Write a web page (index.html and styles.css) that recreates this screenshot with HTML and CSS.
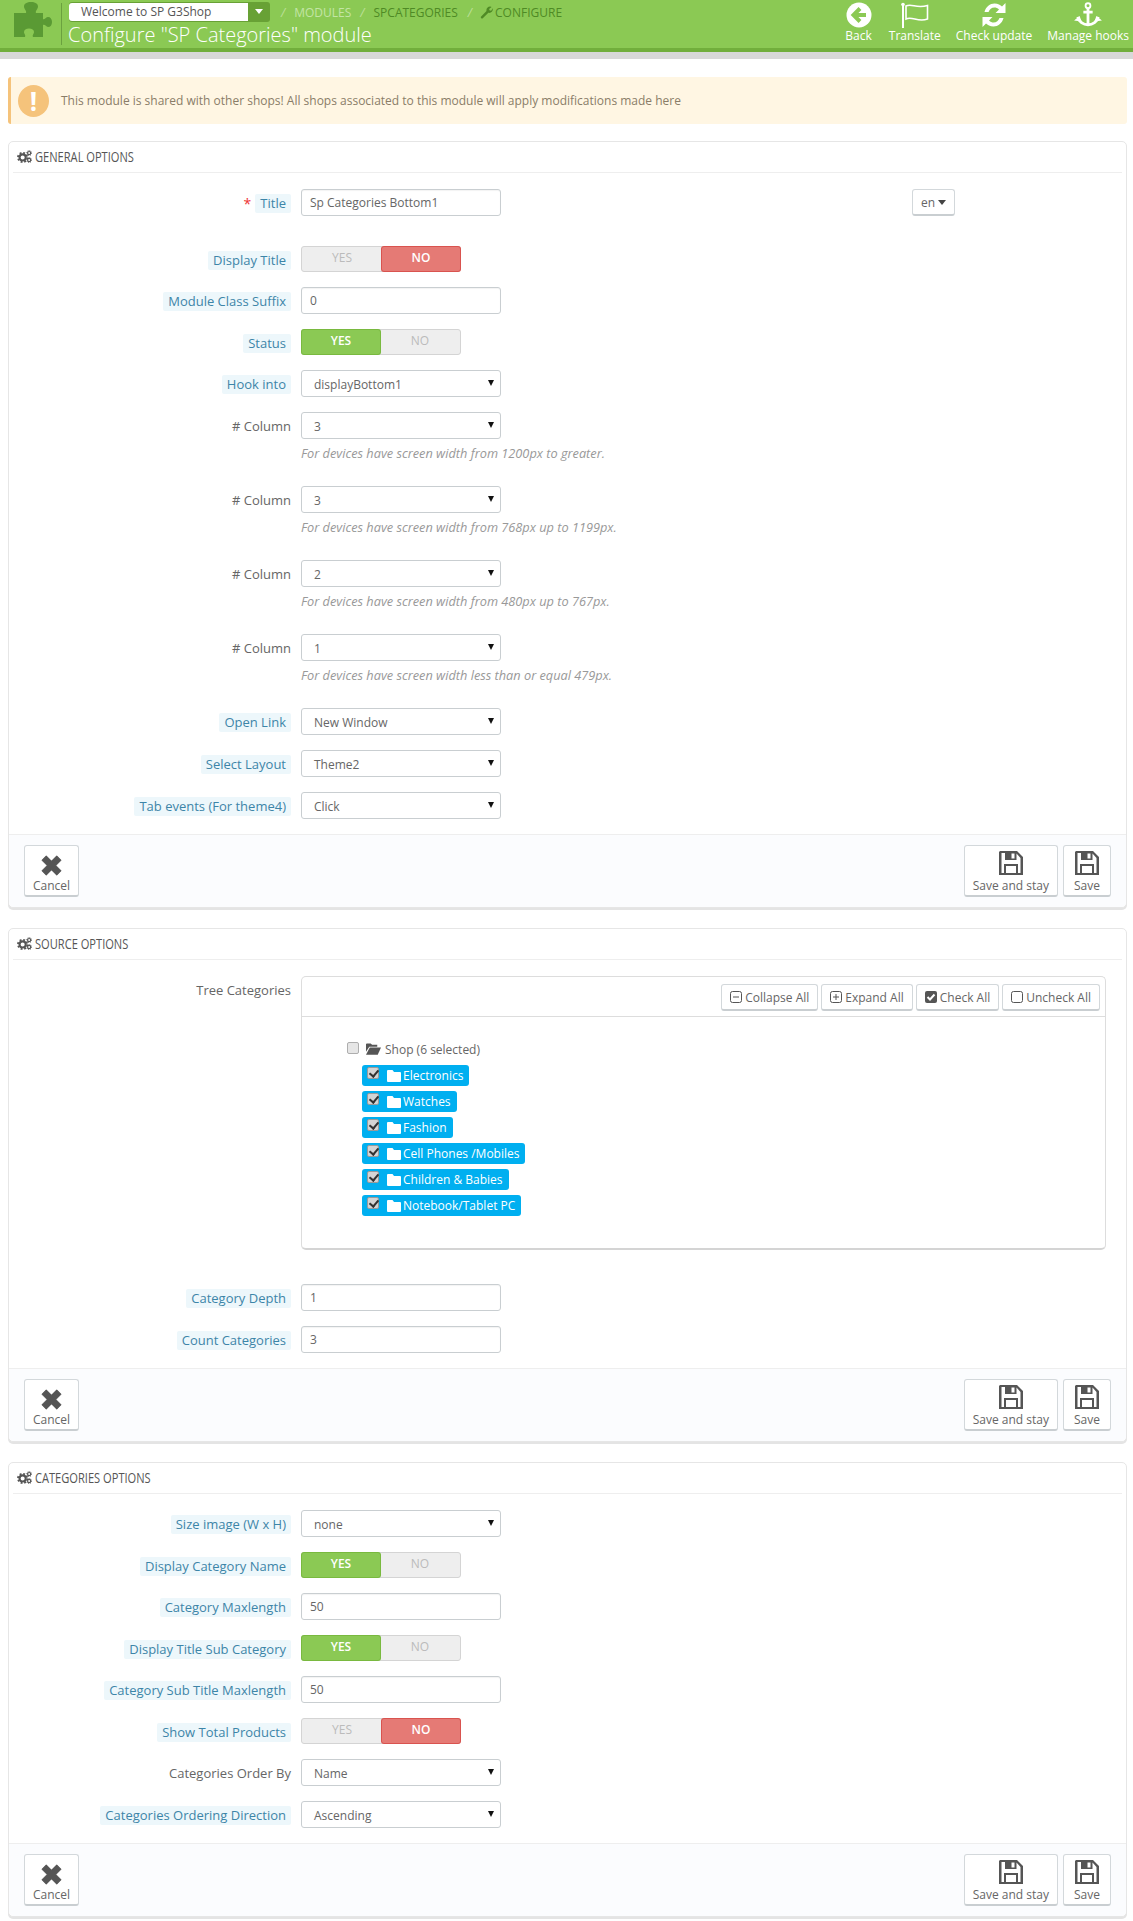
FILE: index.html
```html
<!DOCTYPE html>
<html lang="en">
<head>
<meta charset="utf-8">
<title>Configure "SP Categories" module</title>
<link rel="stylesheet" href="styles.css">
</head>
<body>
<svg class="defs" width="0" height="0" aria-hidden="true">
  <defs>
    <symbol id="cogs" viewBox="0 0 16 14">
      <circle cx="6" cy="8" r="3.3" fill="none" stroke="currentColor" stroke-width="2.2"/>
      <circle cx="6" cy="8" r="5" fill="none" stroke="currentColor" stroke-width="2" stroke-dasharray="2 1.93"/>
      <circle cx="13" cy="3.3" r="1.7" fill="none" stroke="currentColor" stroke-width="1.3"/>
      <circle cx="13" cy="3.3" r="2.7" fill="none" stroke="currentColor" stroke-width="1" stroke-dasharray="1 1.12"/>
      <circle cx="13" cy="10.8" r="1.7" fill="none" stroke="currentColor" stroke-width="1.3"/>
      <circle cx="13" cy="10.8" r="2.7" fill="none" stroke="currentColor" stroke-width="1" stroke-dasharray="1 1.12"/>
    </symbol>
    <symbol id="x" viewBox="0 0 20 20">
      <path d="M5 1 10 6 15 1 19 5 14 10 19 15 15 19 10 14 5 19 1 15 6 10 1 5Z" fill="currentColor" stroke="currentColor" stroke-linejoin="round" stroke-width="1"/>
    </symbol>
    <symbol id="floppy" viewBox="0 0 24 24">
      <path fill-rule="evenodd" fill="currentColor" d="M1 0H18L24 6V24H0V1ZM2.500 2V22H5V13H19V22H21.500V7L17.500 2.500V9H6V2ZM7 22H17V15H7ZM12.500 2.500V7.500H15.500V2.500Z"/>
    </symbol>
    <symbol id="folder" viewBox="0 0 14 12">
      <path fill="currentColor" d="M1 0H5.500L7 2H13A1 1 0 0 1 14 3V11A1 1 0 0 1 13 12H1A1 1 0 0 1 0 11V1A1 1 0 0 1 1 0Z"/>
    </symbol>
    <symbol id="folder-open" viewBox="0 0 16 12">
      <path fill="currentColor" d="M0 1A1 1 0 0 1 1 0H5L6.500 1.500H12V3.500H3.500L0 9Z"/>
      <path fill="currentColor" d="M4 4.500H16L12.500 12H0Z"/>
    </symbol>
  </defs>
</svg>

<header class="topbar">
  <svg class="puzzle" viewBox="0 0 40 36" aria-hidden="true">
    <path fill="currentColor" d="M2 11H14C15 9 12 7 12 4.500 12 1.500 15 0 19 0 23 0 26 1.500 26 4.500 26 7 23 9 24 11H31V17C33 18 34 15 36 15 38.500 15 40 17 40 20 40 23 38.500 25 36 25 34 25 33 22 31 23V35H21C20 33 22 32 22 30 22 28 20 26.500 17 26.500 14 26.500 12 28 12 30 12 32 14 33 13 35H2Z"/>
  </svg>
  <div class="topbar-main">
    <div class="crumbs">
      <div class="shop-select">
        <span class="shop-name">Welcome to SP G3Shop</span>
        <span class="shop-caret"></span>
      </div>
      <span class="crumb-sep">/</span>
      <span class="crumb crumb-light">MODULES</span>
      <span class="crumb-sep">/</span>
      <span class="crumb">SPCATEGORIES</span>
      <span class="crumb-sep">/</span>
      <span class="crumb crumb-icon">
        <svg class="wrench" viewBox="0 0 14 14" aria-hidden="true"><path fill="currentColor" d="M1 11.500 7 5.500C6.500 3 8 .5 11 .5L12.500 1 9.800 3.300 10.400 4.800 12 5 13.800 2.500C14.300 5.500 12 8 9 7.300L3 13.300C2 14 .3 12.500 1 11.500Z"/></svg>
        CONFIGURE
      </span>
    </div>
    <h1 class="page-title">Configure "SP Categories" module</h1>
  </div>
  <nav class="toolbar">
    <a class="tool tool-back">
      <svg viewBox="0 0 26 26" aria-hidden="true"><circle cx="13" cy="13" r="12.500" fill="currentColor"/><path d="M14 6.500 7.500 13 14 19.500M8 13H20" fill="none" stroke="#8bc954" stroke-width="4"/></svg>
      <span>Back</span>
    </a>
    <a class="tool tool-translate">
      <svg viewBox="0 0 30 26" aria-hidden="true"><circle cx="3" cy="2.500" r="1.800" fill="currentColor"/><path d="M3 3V26" stroke="currentColor" stroke-width="2"/><path d="M6 4C12 1 16 7 27.500 3.500V17C18 20.500 12 14 6 17Z" fill="none" stroke="currentColor" stroke-width="1.600"/></svg>
      <span>Translate</span>
    </a>
    <a class="tool tool-update">
      <svg viewBox="0 0 26 26" aria-hidden="true"><path fill="currentColor" d="M3.500 10C5 4.500 9 1.500 13.500 1.500 17 1.500 19.500 3 21 4.500L24.500 1V11H14.500L18 7.500C16.500 6 15 5.500 13.500 5.500 10.500 5.500 8.500 7.500 7.500 10ZM22.500 16C21 21.500 17 24.500 12.500 24.500 9 24.500 6.500 23 5 21.500L1.500 25V15H11.500L8 18.500C9.500 20 11 20.500 12.500 20.500 15.500 20.500 17.500 18.500 18.500 16Z"/></svg>
      <span>Check update</span>
    </a>
    <a class="tool tool-hooks">
      <svg viewBox="0 0 30 28" aria-hidden="true"><circle cx="15" cy="4" r="2.600" fill="none" stroke="currentColor" stroke-width="2"/><path d="M15 7V25M10 11H20" stroke="currentColor" stroke-width="3" fill="none"/><path d="M4 16C5 21 10 24.500 15 24.500 20 24.500 25 21 26 16" stroke="currentColor" stroke-width="3" fill="none"/><path fill="currentColor" d="M0 20 6 15 8 21ZM30 20 24 15 22 21Z"/></svg>
      <span>Manage hooks</span>
    </a>
  </nav>
</header>
<div class="topbar-shadow"></div>

<main class="content">
  <div class="alert">
    <span class="alert-icon">!</span>
    <p>This module is shared with other shops! All shops associated to this module will apply modifications made here</p>
  </div>

  <section class="panel">
    <h2 class="panel-heading"><svg class="cogs"><use href="#cogs"/></svg><span class="heading-text">GENERAL OPTIONS</span></h2>
    <div class="panel-body">
      <div class="row row-title">
        <div class="label-cell"><span class="required">*</span><label class="chip">Title</label></div>
        <input class="field" value="Sp Categories Bottom1">
        <button class="lang-btn">en <span class="caret"></span></button>
      </div>
      <div class="row row-switch">
        <div class="label-cell"><label class="chip">Display Title</label></div>
        <div class="switch"><span>YES</span><span class="no-on">NO</span></div>
      </div>
      <div class="row">
        <div class="label-cell"><label class="chip">Module Class Suffix</label></div>
        <input class="field" value="0">
      </div>
      <div class="row row-switch">
        <div class="label-cell"><label class="chip">Status</label></div>
        <div class="switch"><span class="yes-on">YES</span><span>NO</span></div>
      </div>
      <div class="row">
        <div class="label-cell"><label class="chip">Hook into</label></div>
        <div class="select">displayBottom1</div>
      </div>
      <div class="row row-help">
        <div class="label-cell"><label class="plain">#&nbsp;Column</label></div>
        <div class="control"><div class="select">3</div><p class="help">For devices have screen width from 1200px to greater.</p></div>
      </div>
      <div class="row row-help">
        <div class="label-cell"><label class="plain">#&nbsp;Column</label></div>
        <div class="control"><div class="select">3</div><p class="help">For devices have screen width from 768px up to 1199px.</p></div>
      </div>
      <div class="row row-help">
        <div class="label-cell"><label class="plain">#&nbsp;Column</label></div>
        <div class="control"><div class="select">2</div><p class="help">For devices have screen width from 480px up to 767px.</p></div>
      </div>
      <div class="row row-help">
        <div class="label-cell"><label class="plain">#&nbsp;Column</label></div>
        <div class="control"><div class="select">1</div><p class="help">For devices have screen width less than or equal 479px.</p></div>
      </div>
      <div class="row">
        <div class="label-cell"><label class="chip">Open Link</label></div>
        <div class="select">New Window</div>
      </div>
      <div class="row">
        <div class="label-cell"><label class="chip">Select Layout</label></div>
        <div class="select">Theme2</div>
      </div>
      <div class="row">
        <div class="label-cell"><label class="chip">Tab events (For theme4)</label></div>
        <div class="select">Click</div>
      </div>
    </div>
    <footer class="panel-footer">
      <button class="act"><svg class="act-x"><use href="#x"/></svg>Cancel</button>
      <span class="spacer"></span>
      <button class="act"><svg class="act-save"><use href="#floppy"/></svg>Save and stay</button>
      <button class="act"><svg class="act-save"><use href="#floppy"/></svg>Save</button>
    </footer>
  </section>

  <section class="panel">
    <h2 class="panel-heading"><svg class="cogs"><use href="#cogs"/></svg><span class="heading-text">SOURCE OPTIONS</span></h2>
    <div class="panel-body">
      <div class="row row-tree">
        <div class="label-cell"><label class="plain">Tree Categories</label></div>
        <div class="tree">
          <div class="tree-tools">
            <button class="tool-btn"><svg class="tb-i" viewBox="0 0 12 12"><rect x=".5" y=".5" width="11" height="11" rx="2" fill="none" stroke="currentColor"/><path d="M3 6H9" stroke="currentColor"/></svg>Collapse All</button>
            <button class="tool-btn"><svg class="tb-i" viewBox="0 0 12 12"><rect x=".5" y=".5" width="11" height="11" rx="2" fill="none" stroke="currentColor"/><path d="M3 6H9M6 3V9" stroke="currentColor"/></svg>Expand All</button>
            <button class="tool-btn"><svg class="tb-i" viewBox="0 0 12 12"><rect width="12" height="12" rx="2" fill="currentColor"/><path d="M2.500 6 5 8.500 9.500 3.500" fill="none" stroke="#fff" stroke-width="2"/></svg>Check All</button>
            <button class="tool-btn"><svg class="tb-i" viewBox="0 0 12 12"><rect x=".5" y=".5" width="11" height="11" rx="2" fill="none" stroke="currentColor"/></svg>Uncheck All</button>
          </div>
          <div class="tree-root">
            <input type="checkbox" class="tree-check">
            <svg class="folder-open"><use href="#folder-open"/></svg>
            <span>Shop (6 selected)</span>
          </div>
          <ul class="tree-list">
            <li class="tree-chip"><input type="checkbox" class="tree-check" checked><svg class="folder"><use href="#folder"/></svg>Electronics</li>
            <li class="tree-chip"><input type="checkbox" class="tree-check" checked><svg class="folder"><use href="#folder"/></svg>Watches</li>
            <li class="tree-chip"><input type="checkbox" class="tree-check" checked><svg class="folder"><use href="#folder"/></svg>Fashion</li>
            <li class="tree-chip"><input type="checkbox" class="tree-check" checked><svg class="folder"><use href="#folder"/></svg>Cell Phones /Mobiles</li>
            <li class="tree-chip"><input type="checkbox" class="tree-check" checked><svg class="folder"><use href="#folder"/></svg>Children &amp; Babies</li>
            <li class="tree-chip"><input type="checkbox" class="tree-check" checked><svg class="folder"><use href="#folder"/></svg>Notebook/Tablet PC</li>
          </ul>
        </div>
      </div>
      <div class="row">
        <div class="label-cell"><label class="chip">Category Depth</label></div>
        <input class="field" value="1">
      </div>
      <div class="row">
        <div class="label-cell"><label class="chip">Count Categories</label></div>
        <input class="field" value="3">
      </div>
    </div>
    <footer class="panel-footer">
      <button class="act"><svg class="act-x"><use href="#x"/></svg>Cancel</button>
      <span class="spacer"></span>
      <button class="act"><svg class="act-save"><use href="#floppy"/></svg>Save and stay</button>
      <button class="act"><svg class="act-save"><use href="#floppy"/></svg>Save</button>
    </footer>
  </section>

  <section class="panel">
    <h2 class="panel-heading"><svg class="cogs"><use href="#cogs"/></svg><span class="heading-text">CATEGORIES OPTIONS</span></h2>
    <div class="panel-body">
      <div class="row">
        <div class="label-cell"><label class="chip">Size image (W x H)</label></div>
        <div class="select">none</div>
      </div>
      <div class="row row-switch">
        <div class="label-cell"><label class="chip">Display Category Name</label></div>
        <div class="switch"><span class="yes-on">YES</span><span>NO</span></div>
      </div>
      <div class="row">
        <div class="label-cell"><label class="chip">Category Maxlength</label></div>
        <input class="field" value="50">
      </div>
      <div class="row row-switch">
        <div class="label-cell"><label class="chip">Display Title Sub Category</label></div>
        <div class="switch"><span class="yes-on">YES</span><span>NO</span></div>
      </div>
      <div class="row">
        <div class="label-cell"><label class="chip">Category Sub Title Maxlength</label></div>
        <input class="field" value="50">
      </div>
      <div class="row row-switch">
        <div class="label-cell"><label class="chip">Show Total Products</label></div>
        <div class="switch"><span>YES</span><span class="no-on">NO</span></div>
      </div>
      <div class="row">
        <div class="label-cell"><label class="plain">Categories Order By</label></div>
        <div class="select">Name</div>
      </div>
      <div class="row">
        <div class="label-cell"><label class="chip">Categories Ordering Direction</label></div>
        <div class="select">Ascending</div>
      </div>
    </div>
    <footer class="panel-footer">
      <button class="act"><svg class="act-x"><use href="#x"/></svg>Cancel</button>
      <span class="spacer"></span>
      <button class="act"><svg class="act-save"><use href="#floppy"/></svg>Save and stay</button>
      <button class="act"><svg class="act-save"><use href="#floppy"/></svg>Save</button>
    </footer>
  </section>
</main>
</body>
</html>
```
FILE: styles.css
```css
* { box-sizing: border-box; }
html, body { margin: 0; padding: 0; background: #fff; }
body { font-family: "Open Sans", sans-serif; font-size: 12px; color: #666; }
.defs { position: absolute; }
button, input { font-family: inherit; }

.topbar { display: flex; height: 52px; background: #8bc954; border-bottom: 4px solid #71ae3c; color: #fff; }
.puzzle { width: 40px; height: 36px; margin: 2px 9px 0 12px; color: #5a9a34; flex: none; }
.topbar-main { margin-top: 3px; height: 42px; border-left: 1px solid #6ba13f; padding-left: 6px; flex: 1; min-width: 0; }
.crumbs { display: flex; align-items: center; height: 20px; margin-top: -1px; font-size: 12px; color: #4f8a25; }
.shop-select { display: flex; width: 201px; height: 20px; margin-left: 1px; background: #68a135; border-radius: 3px; padding: 0; margin-right: 9px; }
.shop-name { width: 179px; margin: 1px 0; background: #fff; border-radius: 3px 0 0 3px; color: #555; padding-left: 12px; line-height: 18px; font-size: 12px; }
.shop-caret { flex: 1; position: relative; }
.shop-caret::after { content: ""; position: absolute; left: 7px; top: 7px; border: 4px solid transparent; border-top: 5px solid #fff; border-bottom: 0; }
.crumb-sep { color: #bde09a; margin: 0 9px 0 2px; font-style: italic; }
.crumb { margin-right: 8px; }
.crumb-light { color: #c3e5a5; margin-right: 7px; }
.crumb-sep + .crumb-icon { margin-left: -1px; }
.crumb-icon { display: flex; align-items: center; gap: 2px; color: #4f8a25; }
.wrench { width: 13px; height: 13px; }
.page-title { margin: 0; font-size: 20px; font-weight: 300; color: #fff; line-height: 25px; white-space: nowrap; }
.toolbar { display: flex; flex: none; align-items: flex-start; padding-right: 4px; }
.tool { display: flex; flex-direction: column; align-items: center; font-size: 12px; line-height: 14px; color: #fff; white-space: nowrap; }
.tool svg { height: 26px; margin-top: 2px; margin-bottom: 1px; }
.tool-back { margin-right: 17px; }
.tool-back svg { width: 26px; }
.tool-translate { margin-right: 15px; }
.tool-translate svg { width: 30px; }
.tool-update { margin-right: 15px; }
.tool-update svg { width: 26px; }
.tool-hooks svg { width: 30px; }
.topbar-shadow { height: 7px; background: #d8d8d8; }

.content { padding: 18px 6px 0 8px; }
.alert { display: flex; align-items: center; height: 47px; margin: 0 0 17px 0; background: #fff6e3; border-left: 3px solid #f5c37b; border-radius: 3px; color: #8a7d68; padding-left: 7px; }
.alert p { margin: 0; }
.alert-icon { width: 31px; height: 32px; margin-right: 12px; border-radius: 50%; background: #f5c37b; color: #fff; font-weight: 700; font-size: 26px; line-height: 32px; text-align: center; flex: none; }

.panel { border: 1px solid #e6e6e6; border-radius: 5px; padding: 0 4px; margin-bottom: 20px; box-shadow: 0 2px 0 #e4e4e4; background: #fff; }
.panel-heading { display: flex; align-items: center; height: 31px; margin: 0; padding: 0 0 2px 4px; border-bottom: 1px solid #eee; font-size: 15px; font-weight: 400; color: #555; white-space: nowrap; }
.heading-text { display: inline-block; transform: scaleX(.74); transform-origin: left center; }
.cogs { width: 15px; height: 13px; margin-right: 3px; color: #555; }
.panel-body { padding-top: 16px; }

.row { display: flex; align-items: flex-start; height: 27px; margin-bottom: 15px; }
.row-title { margin-bottom: 30px; }
.row-switch { height: 26px; }
.row-help { height: 59px; }
.row-tree { height: 274px; margin-bottom: 34px; }
.label-cell { width: 278px; flex: none; margin-right: 10px; display: flex; justify-content: flex-end; align-items: flex-start; padding-top: 5px; font-size: 13px; }
.chip { background: #edf7fb; color: #3d85a8; padding: 0 5px; line-height: 19px; border-radius: 2px; }
.plain { color: #666; line-height: 19px; }
.required { color: #e33; margin-right: 4px; font-size: 14px; line-height: 19px; }

.field { width: 200px; height: 27px; border: 1px solid #c9ced1; border-radius: 3px; padding: 0 8px; font-size: 12px; color: #666; background: #fff; outline: 0; box-shadow: inset 0 1px 1px rgba(0,0,0,.05); }
.select { position: relative; width: 200px; height: 27px; border: 1px solid #c9ced1; border-radius: 3px; padding-left: 12px; font-size: 12px; line-height: 27px; color: #666; background: #fff; }
.select::after { content: ""; position: absolute; right: 6px; top: 9px; border: 3px solid transparent; border-top: 6px solid #111; border-bottom: 0; }
.control { width: 200px; }
.help { margin: 7px 0 0; font-size: 12.75px; line-height: 14px; font-style: italic; color: #999; white-space: nowrap; }

.lang-btn { margin-left: 411px; width: 43px; height: 27px; border: 1px solid #d3d8db; border-bottom: 2px solid #c9ced1; border-radius: 3px; background: #fff; color: #666; font-size: 12px; padding: 0; }
.caret { display: inline-block; vertical-align: 2px; border: 4px solid transparent; border-top: 5px solid #444; border-bottom: 0; }

.switch { display: flex; width: 160px; height: 26px; border: 1px solid #d4d4d4; border-radius: 3px; background: #eee; color: #bbb; font-size: 12px; line-height: 22px; text-align: center; }
.switch span { flex: 1 1 0; border-radius: 2px; }
.switch .no-on { flex: 0 0 78px; background: #e57a75; color: #fff; box-shadow: 0 0 0 1px #d9534f; font-weight: 600; }
.switch .yes-on { flex: 0 0 78px; background: #8bc954; color: #fff; box-shadow: 0 0 0 1px #79b93f; font-weight: 600; }

.panel-footer { display: flex; gap: 5px; height: 73px; margin: 0 -4px; padding: 10px 15px 0 15px; background: #fbfcfe; border-top: 1px solid #eee; border-radius: 0 0 5px 5px; align-items: flex-start; }
.spacer { flex: 1; }
.act { display: flex; flex-direction: column; align-items: center; min-width: 48px; height: 52px; border: 1px solid #d3d8db; border-bottom: 2px solid #c9ced1; border-radius: 3px; background: #fff; color: #666; font-size: 12px; line-height: 14px; padding: 5px 8px 0; white-space: nowrap; }
.act-x { width: 21px; height: 21px; margin: 4px 0 3px; color: #555; }
.act-save { width: 24px; height: 24px; margin-bottom: 4px; color: #555; }

.tree { width: 805px; height: 274px; border: 1px solid #ddd; border-bottom: 2px solid #d4d4d4; border-radius: 5px; }
.tree-tools { display: flex; justify-content: flex-end; gap: 3px; height: 40px; padding: 7px 5px 0 0; border-bottom: 1px solid #ddd; }
.tool-btn { display: flex; align-items: center; height: 27px; border: 1px solid #d3d8db; border-bottom: 2px solid #c9ced1; border-radius: 3px; background: #fff; color: #666; font-size: 12px; padding: 0 8px; white-space: nowrap; }
.tb-i { width: 12px; height: 12px; margin-right: 3px; color: #555; }
.tree-root { display: flex; align-items: center; height: 16px; margin: 24px 0 0 45px; }
.tree-root span { color: #666; }
.tree-root .tree-check { margin-top: -3px; }
.tree-check { appearance: none; position: relative; width: 12px; height: 12px; margin: 0; flex: none; background: #e6e6e6; border: 1px solid #aeaeae; border-radius: 2px; }
.tree-chip .tree-check { align-self: flex-start; margin-top: 2px; background: #d4d4d4; border-color: #9a9a9a; }
.tree-check:checked::after { content: ""; position: absolute; left: 3px; top: 0; width: 4px; height: 7px; border: solid #333; border-width: 0 2px 2px 0; transform: rotate(40deg); }
.folder-open { width: 15px; height: 12px; margin: 0 4px 0 7px; color: #555; }
.tree-list { list-style: none; margin: 8px 0 0 60px; padding: 0; }
.tree-chip { display: flex; width: fit-content; align-items: center; height: 21px; margin-bottom: 5px; padding: 0 6px 0 5px; background: #00aff0; color: #fff; border-radius: 3px; white-space: nowrap; }
.folder { width: 14px; height: 12px; margin: 0 2px 0 8px; color: #fff; }
```
